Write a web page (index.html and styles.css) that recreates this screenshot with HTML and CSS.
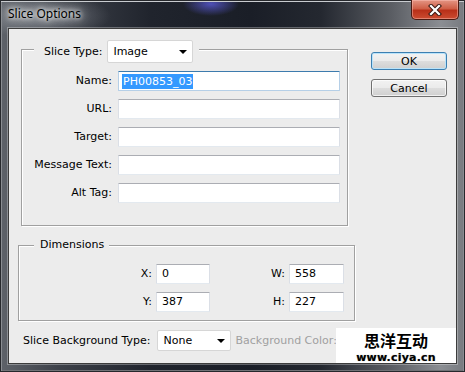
FILE: index.html
```html
<!DOCTYPE html>
<html lang="en">

<head>
    <meta charset="UTF-8">
    <title>Slice Options</title>
    <link rel="stylesheet" href="styles.css">
</head>

<body>
    <div class="window">
        <!-- Title bar -->
        <div class="titlebar">
            <span class="title">Slice Options</span>
            <span class="close-btn">
                <svg width="14" height="12" viewBox="0 0 14 12">
                    <path d="M3 2 L11 10 M11 2 L3 10" stroke="#3a1a14" stroke-width="4.2" stroke-linecap="square" fill="none"/>
                    <path d="M3 2 L11 10 M11 2 L3 10" stroke="#fff" stroke-width="2.2" stroke-linecap="square" fill="none"/>
                </svg>
            </span>
        </div>

        <!-- Dialog body -->
        <div class="client">
            <div class="top-section">
                <div class="group slice-group">
                    <div class="group-title slice-title">
                        <span>Slice Type:</span>
                        <div class="dropdown type-select">Image</div>
                    </div>
                    <div class="form-grid">
                        <label>Name:</label>
                        <div class="textbox focused"><span class="selected">PH00853_03</span></div>
                        <label>URL:</label>
                        <div class="textbox"></div>
                        <label>Target:</label>
                        <div class="textbox"></div>
                        <label>Message Text:</label>
                        <div class="textbox"></div>
                        <label>Alt Tag:</label>
                        <div class="textbox"></div>
                    </div>
                </div>
                <div class="buttons">
                    <button class="btn default">OK</button>
                    <button class="btn">Cancel</button>
                </div>
            </div>

            <div class="group dims-group">
                <div class="group-title dims-title"><span>Dimensions</span></div>
                <div class="dims-grid">
                    <label>X:</label>
                    <div class="textbox small">0</div>
                    <label>W:</label>
                    <div class="textbox small">558</div>
                    <label>Y:</label>
                    <div class="textbox small">387</div>
                    <label>H:</label>
                    <div class="textbox small">227</div>
                </div>
            </div>

            <div class="bg-row">
                <span>Slice Background Type:</span>
                <div class="dropdown bg-select">None</div>
                <span class="disabled">Background Color:</span>
            </div>

            <!-- Watermark in the corner -->
            <div class="watermark">
                <div class="wm-cn">思洋互动</div>
                <div class="wm-url">www.ciya.cn</div>
            </div>
        </div>
    </div>
</body>

</html>
```

FILE: styles.css
```css
/* Page */
body {
    margin: 0;
    padding: 0;
    font-family: "DejaVu Sans", sans-serif;
    font-size: 11px;
    color: #000;
}

/* Window frame */
.window {
    width: 465px;
    height: 372px;
    box-sizing: border-box;
    padding: 0 7px 7px 7px;
    display: flex;
    flex-direction: column;
    border: 1px solid #26282c;
    box-shadow: inset 0 1px 0 #c9ccd0, inset 1px 0 0 #8a8d92, inset -1px 0 0 #8a8d92, inset 0 -1px 0 #707276;
    background:
        radial-gradient(ellipse 28px 12px at 210px 3px, rgba(95, 95, 230, 0.75), transparent),
        radial-gradient(ellipse 70px 22px at 40px 15px, rgba(170, 175, 182, 0.55), transparent),
        linear-gradient(90deg, #5e6269 0, #3c4048 60px, #20242d 150px, #1a1e27 250px, #242830 320px, #5a5d63 390px, #8b8e93 440px, #76797e 465px);
}

/* Title bar */
.titlebar {
    height: 27px;
    display: flex;
    justify-content: space-between;
    align-items: flex-start;
}

.title {
    margin-top: 4px;
    font-family: "Noto Sans", sans-serif;
    font-size: 12px;
    color: #000;
    text-shadow: 0 0 4px #fff, 0 0 8px #fff, 0 0 12px rgba(255, 255, 255, 0.8);
}

.close-btn {
    width: 46px;
    height: 19px;
    margin-right: -2px;
    margin-top: -1px;
    display: flex;
    align-items: center;
    justify-content: center;
    border: 1px solid #4a1a12;
    border-top: none;
    border-radius: 0 0 5px 5px;
    background: linear-gradient(#e49584, #cf5f47 45%, #b93019 55%, #cc4c31);
    box-shadow: inset 0 0 0 1px rgba(255, 200, 190, 0.45);
}

/* Client area */
.client {
    flex: 1;
    position: relative;
    background-color: #ececec;
    border: 1px solid #3c3c3c;
    box-shadow: 0 0 0 1px rgba(255, 255, 255, 0.3);
}

.top-section {
    display: flex;
    align-items: flex-start;
    padding: 20px 0 0 12px;
}

/* Etched group boxes */
.group {
    border: 1px solid #a0a0a0;
    box-shadow: inset 1px 1px 0 #fff, 1px 1px 0 #fff;
}

.group-title {
    display: flex;
    align-items: center;
    width: fit-content;
    background-color: #ececec;
}

.slice-group {
    width: 327px;
    box-sizing: border-box;
    padding-bottom: 22px;
}

.slice-title {
    margin: -10px 0 0 12px;
    padding: 0 6px 0 10px;
    gap: 5px;
}

.form-grid {
    display: grid;
    grid-template-columns: 90px 222px;
    grid-auto-rows: 20px;
    column-gap: 6px;
    row-gap: 8px;
    margin-top: 8px;
}

.form-grid label,
.dims-grid label {
    text-align: right;
    line-height: 20px;
}

/* Text boxes */
.textbox {
    box-sizing: border-box;
    height: 20px;
    background-color: #fff;
    border: 1px solid #dbdfe6;
    border-top-color: #abadb3;
    border-bottom-color: #e3e9ef;
    border-radius: 1px;
    padding-left: 3px;
    line-height: 18px;
    display: flex;
    align-items: center;
}

.textbox.focused {
    border-color: #b5cfe7;
    border-top-color: #3d7bad;
}

.selected {
    background-color: #3399ff;
    color: #fff;
    padding: 0 1px;
    line-height: 15px;
}

.textbox.small {
    padding-left: 5px;
}

/* Drop-down lists */
.dropdown {
    position: relative;
    box-sizing: border-box;
    background-color: #fff;
    border: 1px solid #d6d6d6;
    border-radius: 2px;
    display: flex;
    align-items: center;
    padding-left: 5px;
}

.dropdown::after {
    content: "";
    position: absolute;
    right: 5px;
    top: 50%;
    margin-top: -2px;
    border-left: 4px solid transparent;
    border-right: 4px solid transparent;
    border-top: 4px solid #000;
}

.type-select {
    width: 86px;
    height: 23px;
}

.bg-select {
    width: 74px;
    height: 21px;
    padding-left: 6px;
}

/* Buttons */
.buttons {
    display: flex;
    flex-direction: column;
    gap: 9px;
    margin: 3px 0 0 23px;
}

.btn {
    width: 76px;
    height: 18px;
    padding: 0;
    font-family: "DejaVu Sans", sans-serif;
    font-size: 11px;
    color: #000;
    border: 1px solid #707070;
    border-radius: 3px;
    background: linear-gradient(#f2f2f2, #ebebeb 48%, #dddddd 52%, #cfcfcf);
    box-shadow: inset 0 0 0 1px rgba(255, 255, 255, 0.7);
}

.btn.default {
    border-color: #3c7fb1;
    box-shadow: inset 0 0 0 1px #b9e3fa;
}

/* Dimensions group */
.dims-group {
    width: 337px;
    box-sizing: border-box;
    margin: 19px 0 0 9px;
    padding-bottom: 8px;
}

.dims-title {
    margin: -8px 0 0 15px;
    padding: 0 5px 0 6px;
    line-height: 14px;
}

.dims-grid {
    display: grid;
    grid-template-columns: 133px 54px 71px 55px;
    grid-auto-rows: 20px;
    column-gap: 4px;
    row-gap: 8px;
    margin-top: 12px;
}

/* Bottom row */
.bg-row {
    display: flex;
    align-items: center;
    margin-top: 9px;
    padding-left: 14px;
    gap: 6px;
}

.disabled {
    color: #a0a0a0;
    margin-left: -1px;
}

/* Watermark */
.watermark {
    position: absolute;
    right: 0;
    bottom: 0;
    width: 120px;
    height: 35px;
    background-color: #fff;
    text-align: center;
}

.wm-cn {
    margin-top: 4px;
    font-family: "Noto Sans CJK SC", sans-serif;
    font-weight: bold;
    font-size: 16px;
    line-height: 16px;
}

.wm-url {
    margin-top: 4px;
    font-family: "DejaVu Sans", sans-serif;
    font-weight: bold;
    font-size: 11px;
    line-height: 11px;
    letter-spacing: 0.2px;
    text-shadow: 0 0 1px #888;
}
```
